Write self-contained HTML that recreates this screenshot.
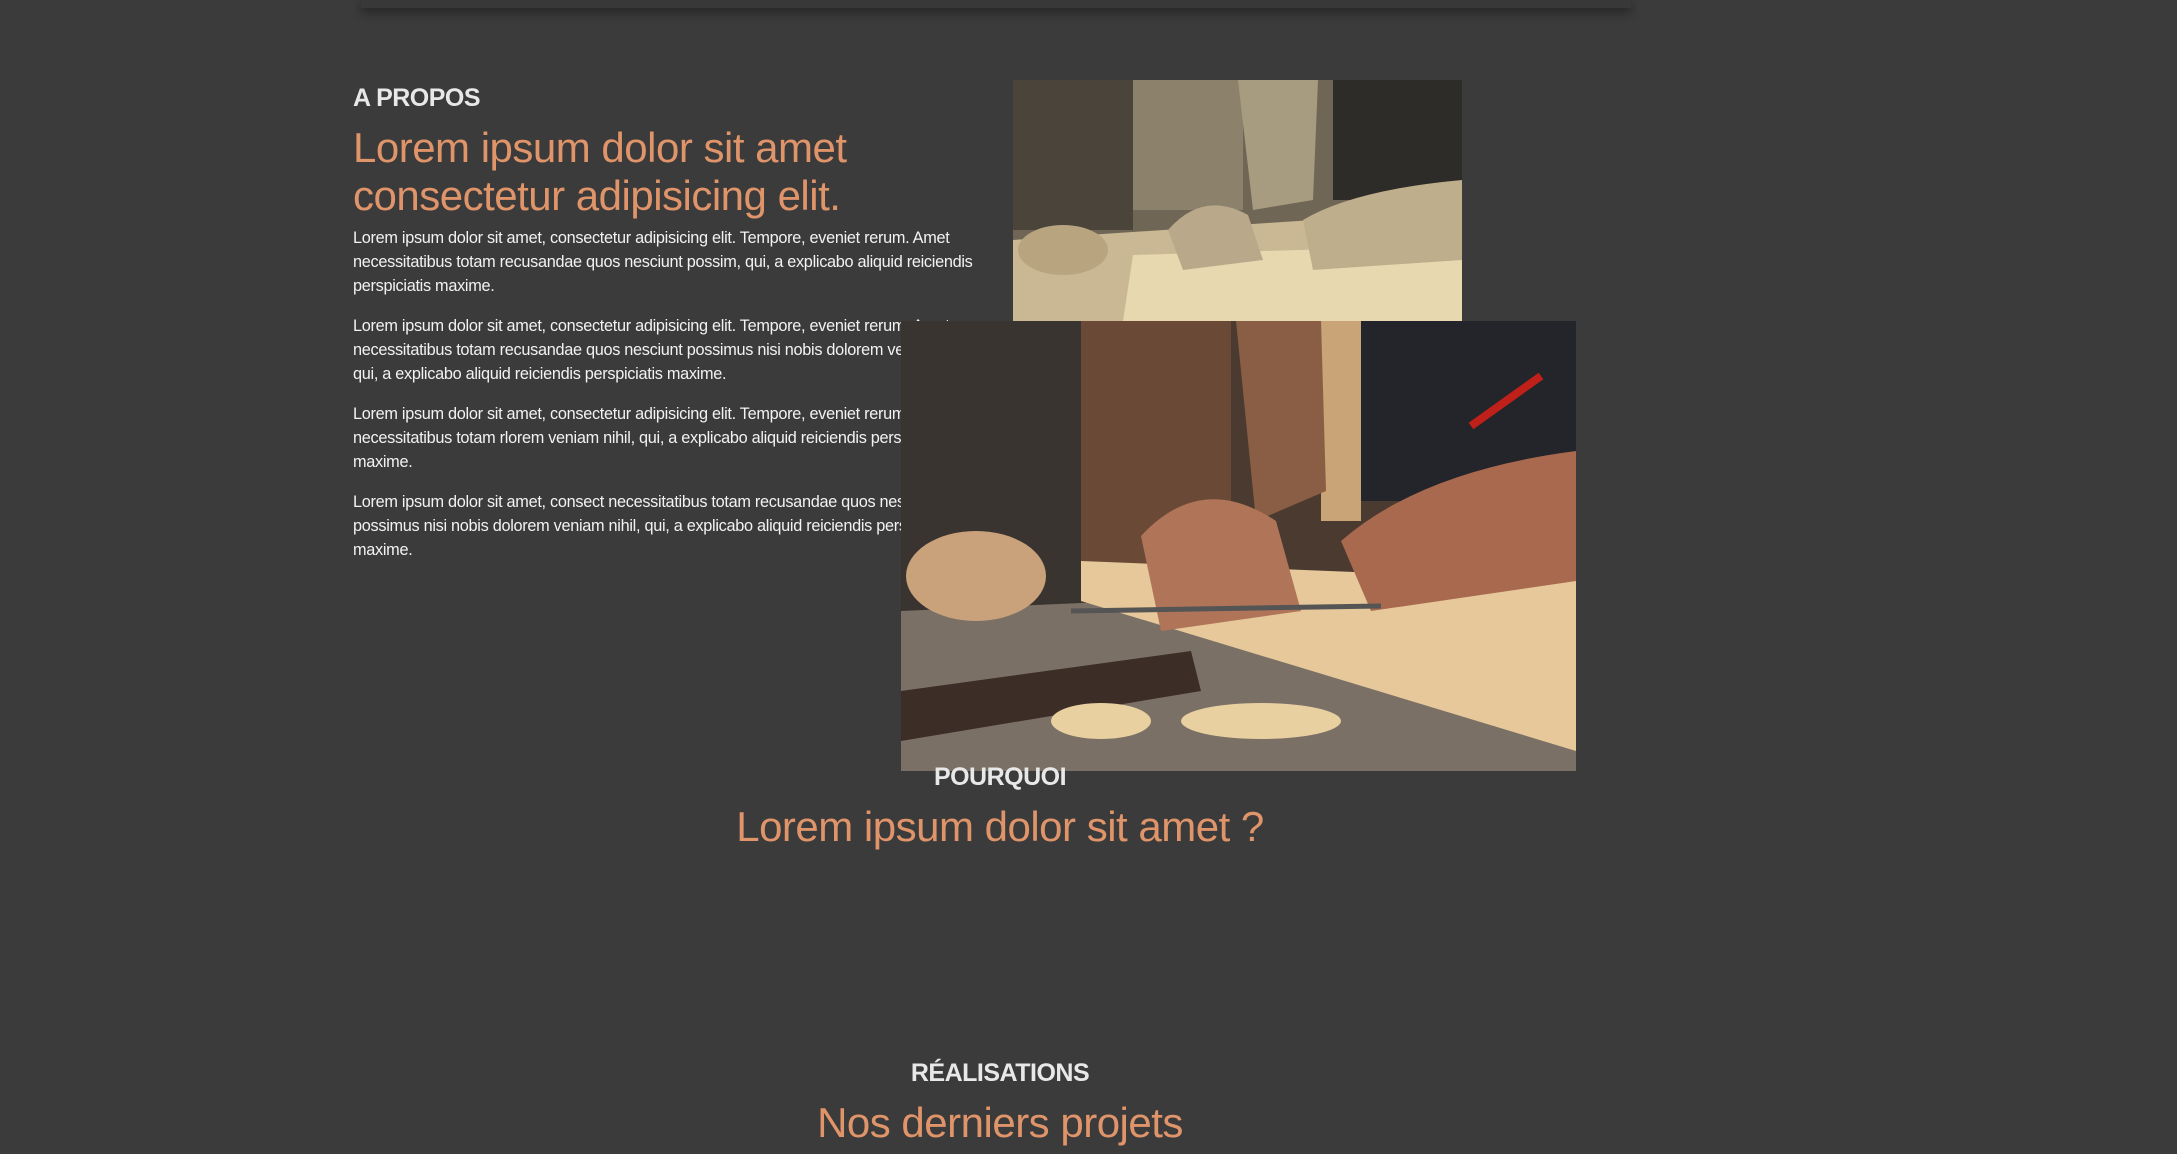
<!DOCTYPE html>
<html><head><meta charset="utf-8"><style>
html,body{margin:0;padding:0;background:#3b3b3b;width:2177px;height:1154px;overflow:hidden;font-family:"Liberation Sans",sans-serif}
.bar{position:absolute;left:361px;top:0;width:1270px;height:8px;background:#383838;box-shadow:0 4px 10px rgba(0,0,0,.45)}
.lbl{position:absolute;color:#e8e8e8;font-size:25px;font-weight:bold;letter-spacing:-0.5px}
.h{position:absolute;color:#e0946a;font-size:42px;line-height:48px;letter-spacing:-0.5px}
.p{position:absolute;left:353px;width:632px;color:#f2f2f2;font-size:16.3px;line-height:24px;letter-spacing:-0.3px}
.img{position:absolute;overflow:hidden}
</style></head><body>
<div class="bar"></div>
<div class="lbl" style="left:353px;top:84px">A PROPOS</div>
<div class="h" style="left:353px;top:124px">Lorem ipsum dolor sit amet<br>consectetur adipisicing elit.</div>
<div class="p" style="top:226px">Lorem ipsum dolor sit amet, consectetur adipisicing elit. Tempore, eveniet rerum. Amet necessitatibus totam recusandae quos nesciunt possim, qui, a explicabo aliquid reiciendis perspiciatis maxime.</div>
<div class="p" style="top:314px">Lorem ipsum dolor sit amet, consectetur adipisicing elit. Tempore, eveniet rerum. Amet necessitatibus totam recusandae quos nesciunt possimus nisi nobis dolorem veniam nihil, qui, a explicabo aliquid reiciendis perspiciatis maxime.</div>
<div class="p" style="top:402px">Lorem ipsum dolor sit amet, consectetur adipisicing elit. Tempore, eveniet rerum. Amet necessitatibus totam rlorem veniam nihil, qui, a explicabo aliquid reiciendis perspiciatis maxime.</div>
<div class="p" style="top:490px">Lorem ipsum dolor sit amet, consect necessitatibus totam recusandae quos nesciunt possimus nisi nobis dolorem veniam nihil, qui, a explicabo aliquid reiciendis perspiciatis maxime.</div>

<div class="img" style="left:1013px;top:80px;width:449px;height:241px;background:#7a7060">
<svg width="449" height="241" viewBox="0 0 449 241">
<rect width="449" height="241" fill="#6f6656"/>
<rect x="0" y="0" width="120" height="150" fill="#4a443a"/>
<rect x="120" y="0" width="110" height="130" fill="#8c826c"/>
<rect x="320" y="0" width="129" height="120" fill="#2e2c28"/>
<path d="M225 0 L305 0 L300 120 L240 130 Z" fill="#a89c80"/>
<path d="M0 160 L449 130 L449 241 L0 241 Z" fill="#c9b893"/>
<path d="M120 175 L449 165 L449 241 L110 241 Z" fill="#e8d8b0"/>
<ellipse cx="50" cy="170" rx="45" ry="25" fill="#b8a57f"/>
<path d="M155 150 Q190 110 235 135 L250 180 L170 190 Z" fill="#b9a98a"/>
<path d="M290 140 Q340 110 449 100 L449 180 L300 190 Z" fill="#bfae8c"/>
</svg></div>

<div class="img" style="left:901px;top:321px;width:675px;height:450px">
<svg width="675" height="450" viewBox="0 0 675 450">
<rect width="675" height="450" fill="#4a3a30"/>
<rect x="0" y="0" width="180" height="300" fill="#3a3430"/>
<rect x="180" y="0" width="150" height="260" fill="#6a4a36"/>
<rect x="420" y="0" width="40" height="200" fill="#c9a477"/>
<rect x="460" y="0" width="215" height="180" fill="#23252a"/>
<path d="M335 0 L420 0 L425 170 L355 200 Z" fill="#8a5e44"/>
<path d="M0 290 L675 260 L675 450 L0 450 Z" fill="#7a7066"/>
<path d="M180 240 L675 260 L675 430 L180 280 Z" fill="#e6c89a"/>
<path d="M0 370 L290 330 L300 370 L0 420 Z" fill="#3c2e26"/>
<ellipse cx="75" cy="255" rx="70" ry="45" fill="#c9a17a"/>
<path d="M240 215 Q300 150 375 200 L400 290 L260 310 Z" fill="#b07458"/>
<path d="M440 220 Q520 150 675 130 L675 260 L470 290 Z" fill="#a8694e"/>
<path d="M570 105 L640 55" stroke="#c0201a" stroke-width="8"/>
<path d="M170 290 L480 285" stroke="#555" stroke-width="5"/>
<ellipse cx="360" cy="400" rx="80" ry="18" fill="#e8d0a0"/>
<ellipse cx="200" cy="400" rx="50" ry="18" fill="#e8d0a0"/>
</svg></div>

<div class="lbl" style="left:0;width:2000px;text-align:center;top:763px">POURQUOI</div>
<div class="h" style="left:0;width:2000px;text-align:center;top:803px">Lorem ipsum dolor sit amet ?</div>
<div class="lbl" style="left:0;width:2000px;text-align:center;top:1059px">RÉALISATIONS</div>
<div class="h" style="left:0;width:2000px;text-align:center;top:1099px">Nos derniers projets</div>
</body></html>
